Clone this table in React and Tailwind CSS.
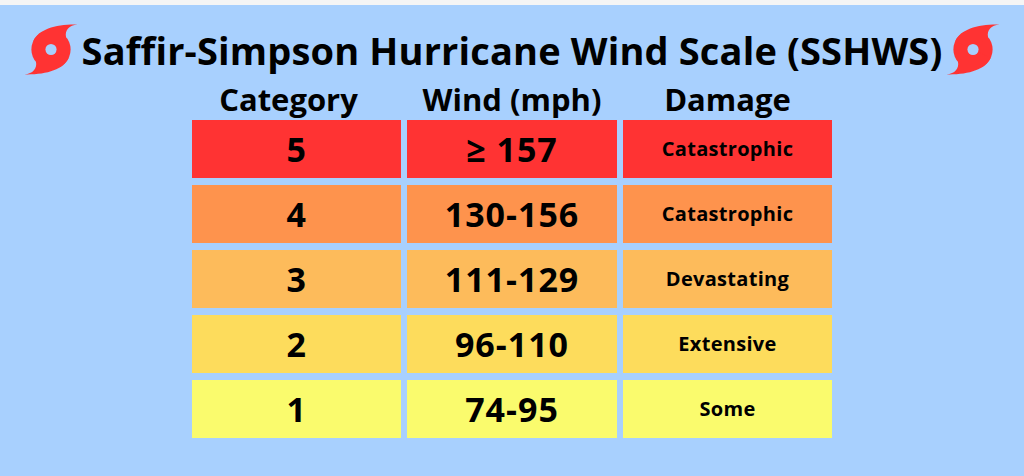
import React from "react";

function Hurricane({ className }) {
  return (
    <svg viewBox="0 0 100 100" className={className}>
      <g fill="#ff3333">
        <circle cx="50" cy="50" r="37" />
        <path d="M100 3 C84 4 76 14 78.3 26.2 L50 50 L16.5 34.4 C26 12 60 2 100 3 Z" />
        <path d="M0 97 C16 96 24 86 21.7 73.8 L50 50 L83.5 65.6 C74 88 40 98 0 97 Z" />
      </g>
      <circle cx="50" cy="50" r="10.5" fill="#a8d0fe" />
    </svg>
  );
}

const rows = [
  { cat: "5", wind: "≥ 157", dmg: "Catastrophic", bg: "bg-[#ff3333]" },
  { cat: "4", wind: "130-156", dmg: "Catastrophic", bg: "bg-[#fe934d]" },
  { cat: "3", wind: "111-129", dmg: "Devastating", bg: "bg-[#fdbb5b]" },
  { cat: "2", wind: "96-110", dmg: "Extensive", bg: "bg-[#fddc5c]" },
  { cat: "1", wind: "74-95", dmg: "Some", bg: "bg-[#fafb6d]" },
];

export default function App() {
  return (
    <div
      className="w-[1024px] h-[476px] overflow-hidden bg-[#a8d0fe] flex flex-col text-black"
      style={{ fontFamily: '"Open Sans", "Liberation Sans", sans-serif' }}
    >
      <div className="h-[5px] bg-[#f5f5f5] shrink-0" />
      <div className="mt-[18px] h-[53px] flex items-center justify-center gap-[4px]">
        <Hurricane className="w-[54px] h-[53px]" />
        <h1 className="text-[38px] font-bold leading-none tracking-[0.15px]">
          Saffir-Simpson Hurricane Wind Scale (SSHWS)
        </h1>
        <Hurricane className="w-[54px] h-[53px]" />
      </div>
      <div className="mx-auto grid grid-cols-[209px_210px_209px] gap-x-[6px] h-[44px] items-center">
        <div className="text-center text-[31px] font-bold leading-none pr-[16px] pt-[2px]">Category</div>
        <div className="text-center text-[31px] font-bold leading-none pt-[2px]">Wind (mph)</div>
        <div className="text-center text-[31px] font-bold leading-none pt-[2px]">Damage</div>
      </div>
      <div className="mx-auto grid grid-cols-[209px_210px_209px] auto-rows-[58px] gap-x-[6px] gap-y-[7px]">
        {rows.map((r) => (
          <React.Fragment key={r.cat}>
            <div className={`${r.bg} flex items-center justify-center text-[34px] tracking-[0.5px] font-bold`}>{r.cat}</div>
            <div className={`${r.bg} flex items-center justify-center text-[34px] tracking-[1px] font-bold`}>{r.wind}</div>
            <div className={`${r.bg} flex items-center justify-center font-bold tracking-[0.3px] ${r.dmg === "Some" ? "text-[20px]" : "text-[20px]"}`}>
              {r.dmg}
            </div>
          </React.Fragment>
        ))}
      </div>
    </div>
  );
}
